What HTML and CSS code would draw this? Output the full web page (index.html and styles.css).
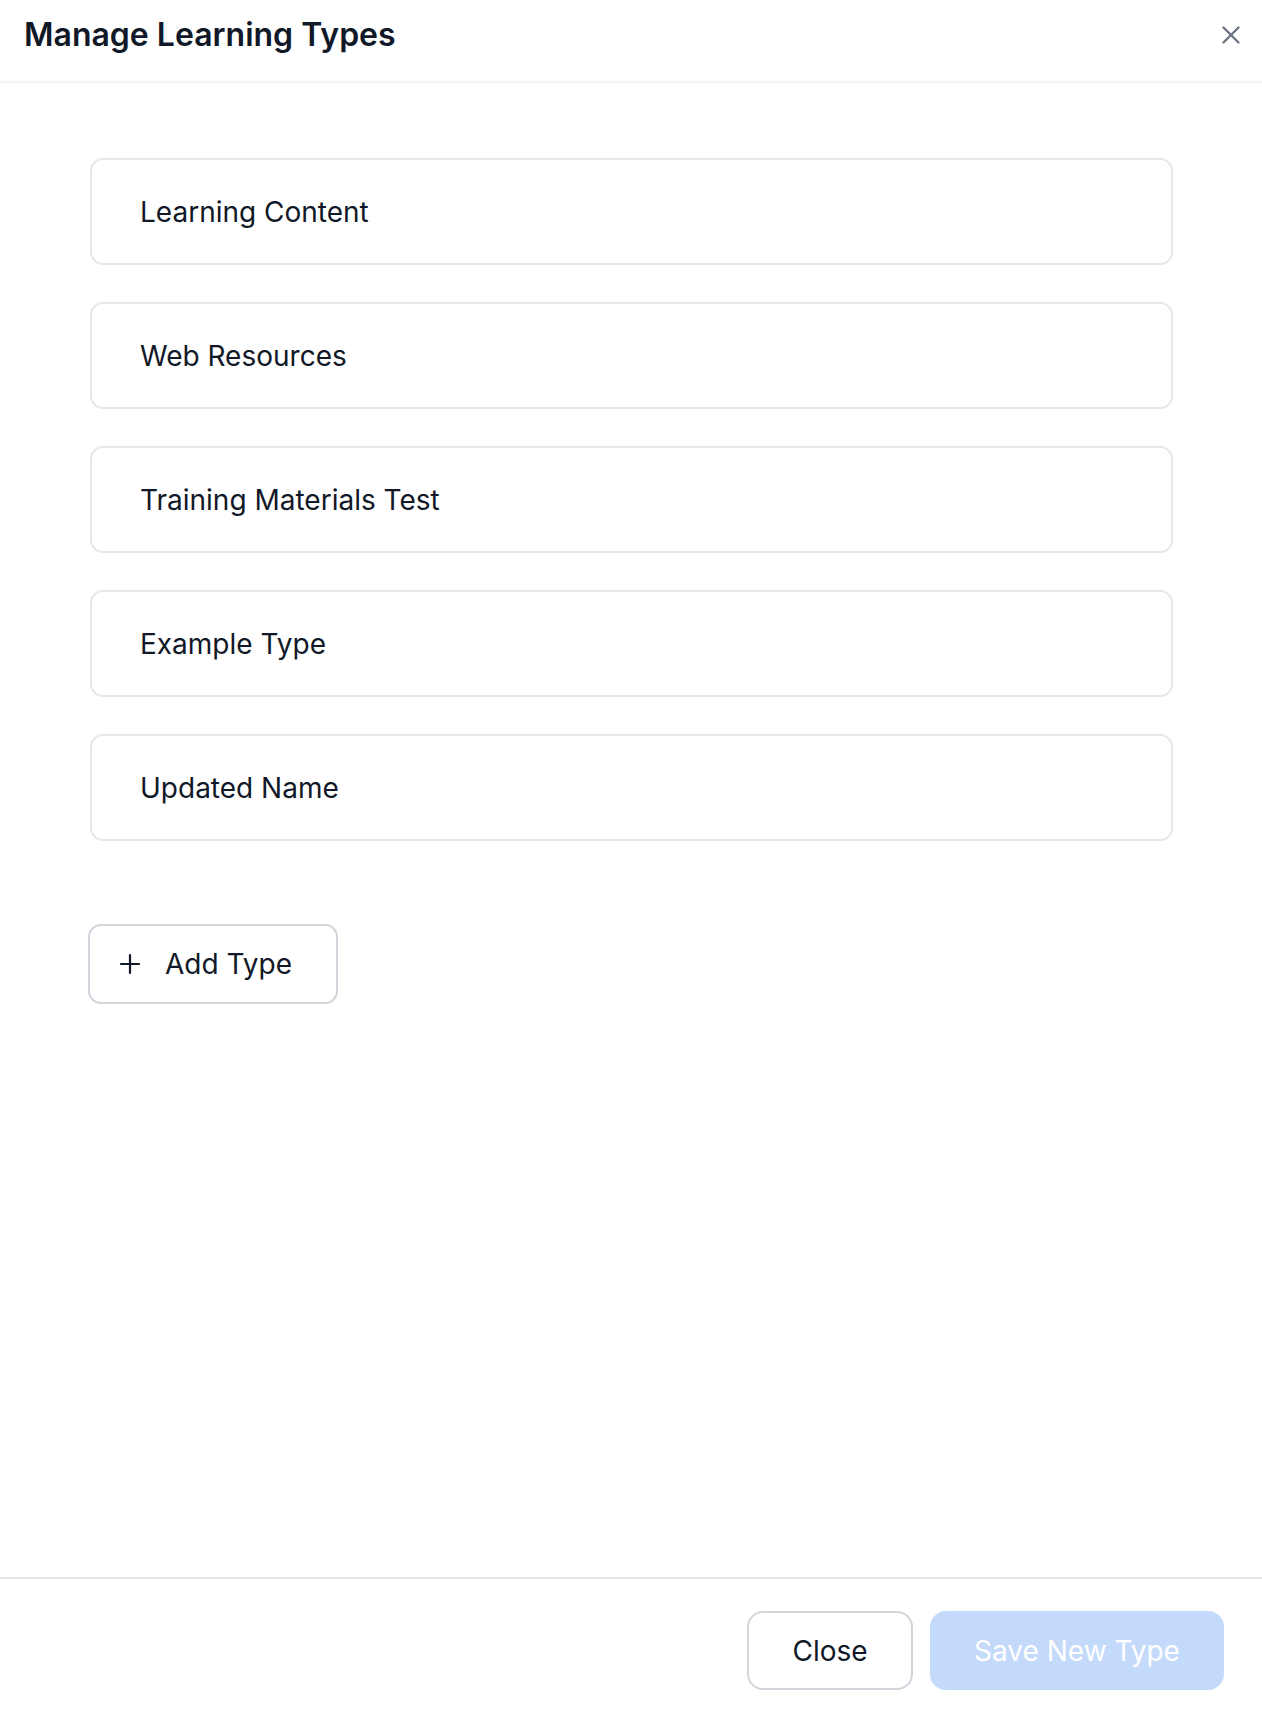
FILE: index.html
```html
<!DOCTYPE html>
<html>
<head>
<meta charset="utf-8">
<link rel="stylesheet" href="styles.css">
</head>
<body>
<div class="modal">
  <header class="header">
    <h1 class="title">Manage Learning Types</h1>
    <button class="x-btn" aria-label="Close">
      <svg width="20" height="20" viewBox="0 0 20 20" fill="none" stroke="#6b7280" stroke-width="2.3" stroke-linecap="round"><path d="M2.5 2.5L17.5 17.5M17.5 2.5L2.5 17.5"/></svg>
    </button>
  </header>
  <main class="body">
    <div class="list">
      <div class="field">Learning Content</div>
      <div class="field">Web Resources</div>
      <div class="field">Training Materials Test</div>
      <div class="field">Example Type</div>
      <div class="field">Updated Name</div>
    </div>
    <button class="add-btn">
      <svg width="22" height="22" viewBox="0 0 22 22" fill="none" stroke="#111827" stroke-width="2.2" stroke-linecap="round"><path d="M11 2V20M2 11H20"/></svg>
      <span>Add Type</span>
    </button>
  </main>
  <footer class="footer">
    <button class="btn btn-outline">Close</button>
    <button class="btn btn-primary" disabled>Save New Type</button>
  </footer>
</div>
</body>
</html>
```

FILE: styles.css
```css
* { box-sizing: border-box; }
html, body { margin: 0; padding: 0; background: #fff; }
body { font-family: Inter, "Noto Sans", sans-serif; color: #111827; }
.modal { width: 1262px; height: 1710px; display: flex; flex-direction: column; }
.header {
  height: 83px;
  border-bottom: 2px solid #f3f4f6;
  display: flex; align-items: center; justify-content: space-between;
  padding: 0 21px 12px 24px;
}
.title { margin: 0; font-size: 32px; font-weight: 600; color: #111827; }
.x-btn { border: 0; background: none; padding: 0; display: flex; }
.body { flex: 1; padding: 75px 89px 0 90px; }
.list { display: flex; flex-direction: column; gap: 37px; }
.field {
  height: 107px;
  border: 2px solid #e5e7eb;
  border-radius: 13px;
  display: flex; align-items: center;
  padding-left: 48px;
  font-size: 28px;
  color: #111827;
}
.add-btn {
  margin-top: 83px; margin-left: -2px;
  height: 80px; width: 250px;
  border: 2px solid #d1d5db; border-radius: 13px; background: #fff;
  display: flex; align-items: center; gap: 24px;
  padding: 0 0 0 29px;
  font-family: inherit; font-size: 28px; color: #111827;
}
.footer {
  height: 133px;
  border-top: 2px solid #e5e7eb;
  display: flex; justify-content: flex-end; align-items: flex-start;
  gap: 17px;
  padding: 32px 38px 0 0;
}
.btn {
  height: 79px; border-radius: 16px;
  font-family: inherit; font-size: 28px;
  display: flex; align-items: center; justify-content: center;
}
.btn-outline { width: 166px; border: 2px solid #d1d5db; background: #fff; color: #111827; }
.btn-primary { width: 294px; border: 0; background: #c4dafa; color: #fff; }
```
